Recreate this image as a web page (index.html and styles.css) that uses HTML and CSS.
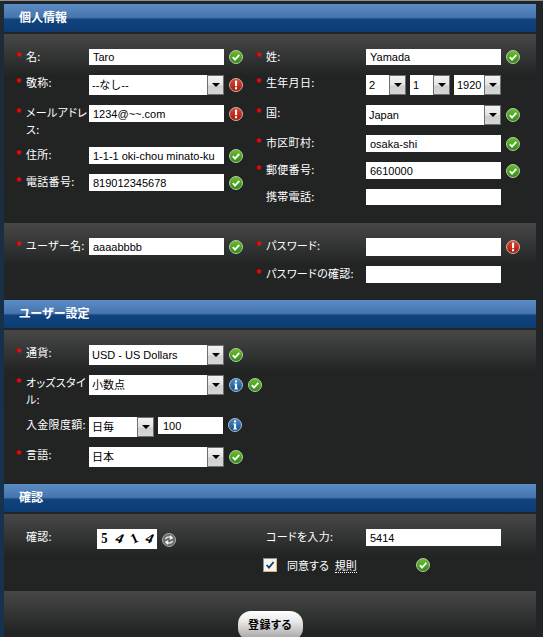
FILE: index.html
```html
<!DOCTYPE html>
<html lang="ja">
<head>
<meta charset="utf-8">
<title>登録</title>
<link rel="stylesheet" href="styles.css">
</head>
<body>
<svg class="sprite" aria-hidden="true">
  <defs>
    <linearGradient id="gGreen" x1="0" y1="0" x2="0" y2="1"><stop offset="0" stop-color="#6cc02c"/><stop offset="1" stop-color="#2c8a10"/></linearGradient>
    <linearGradient id="gRed" x1="0" y1="0" x2="0" y2="1"><stop offset="0" stop-color="#e04a32"/><stop offset="1" stop-color="#a81408"/></linearGradient>
    <linearGradient id="gBlue" x1="0" y1="0" x2="0" y2="1"><stop offset="0" stop-color="#4a8cc8"/><stop offset="1" stop-color="#124f8e"/></linearGradient>
    <symbol id="ok" viewBox="0 0 14 14"><circle cx="7" cy="7" r="6.5" fill="url(#gGreen)" stroke="#b9c4b0"/><path d="M3.8 7.2 6 9.6 10.3 4.9" fill="none" stroke="#fff" stroke-width="1.9"/></symbol>
    <symbol id="err" viewBox="0 0 14 14"><circle cx="7" cy="7" r="6.5" fill="url(#gRed)" stroke="#c9b5b0"/><rect x="6" y="2.6" width="2.1" height="5.6" fill="#fff"/><rect x="6" y="9.2" width="2.1" height="2.1" fill="#fff"/></symbol>
    <symbol id="info" viewBox="0 0 14 14"><circle cx="7" cy="7" r="6.5" fill="url(#gBlue)" stroke="#b0bcc9"/><rect x="6" y="2.4" width="2.1" height="2" fill="#fff"/><path d="M5.2 5.6H8.1V10.4H9V11.4H5.2V10.4H6V6.6H5.2Z" fill="#fff"/></symbol>
  </defs>
</svg>
<div class="page">
  <h2 class="bar">個人情報</h2>
  <section class="panel p1">
    <div class="col left">
      <div class="row"><span class="star">*</span><label class="lab">名:</label><div class="ctrl"><input class="inp h16" value="Taro"><svg class="ic"><use href="#ok"/></svg></div></div>
      <div class="row"><span class="star">*</span><label class="lab">敬称:</label><div class="ctrl"><div class="sel w135"><select><option>--なし--</option></select><span class="arrow"></span></div><svg class="ic"><use href="#err"/></svg></div></div>
      <div class="row"><span class="star">*</span><label class="lab">メールアドレス:</label><div class="ctrl"><input class="inp" value="1234@~~.com"><svg class="ic"><use href="#err"/></svg></div></div>
      <div class="row"><span class="star">*</span><label class="lab">住所:</label><div class="ctrl"><input class="inp" value="1-1-1 oki-chou minato-ku"><svg class="ic"><use href="#ok"/></svg></div></div>
      <div class="row"><span class="star">*</span><label class="lab">電話番号:</label><div class="ctrl"><input class="inp" value="819012345678"><svg class="ic"><use href="#ok"/></svg></div></div>
    </div>
    <div class="col right">
      <div class="row"><span class="star">*</span><label class="lab">姓:</label><div class="ctrl"><input class="inp h16" value="Yamada"><svg class="ic"><use href="#ok"/></svg></div></div>
      <div class="row"><span class="star">*</span><label class="lab">生年月日:</label><div class="ctrl dates"><div class="sel w40"><select><option>2</option></select><span class="arrow"></span></div><div class="sel w40"><select><option>1</option></select><span class="arrow"></span></div><div class="sel w47"><select><option>1920</option></select><span class="arrow"></span></div></div></div>
      <div class="row"><span class="star">*</span><label class="lab">国:</label><div class="ctrl"><div class="sel w135"><select><option>Japan</option></select><span class="arrow"></span></div><svg class="ic"><use href="#ok"/></svg></div></div>
      <div class="row"><span class="star">*</span><label class="lab">市区町村:</label><div class="ctrl"><input class="inp" value="osaka-shi"><svg class="ic"><use href="#ok"/></svg></div></div>
      <div class="row"><span class="star">*</span><label class="lab">郵便番号:</label><div class="ctrl"><input class="inp" value="6610000"><svg class="ic"><use href="#ok"/></svg></div></div>
      <div class="row"><span class="star"></span><label class="lab">携帯電話:</label><div class="ctrl"><input class="inp h16"></div></div>
    </div>
  </section>
  <section class="panel p2">
    <div class="col left">
      <div class="row"><span class="star">*</span><label class="lab">ユーザー名:</label><div class="ctrl"><input class="inp" value="aaaabbbb"><svg class="ic"><use href="#ok"/></svg></div></div>
    </div>
    <div class="col right">
      <div class="row"><span class="star">*</span><label class="lab">パスワード:</label><div class="ctrl"><input class="inp h18"><svg class="ic"><use href="#err"/></svg></div></div>
      <div class="row"><span class="star">*</span><label class="lab">パスワードの確認:</label><div class="ctrl"><input class="inp"></div></div>
    </div>
  </section>
  <h2 class="bar">ユーザー設定</h2>
  <section class="panel p2">
    <div class="col left wide">
      <div class="row"><span class="star">*</span><label class="lab">通貨:</label><div class="ctrl"><div class="sel w135"><select><option>USD - US Dollars</option></select><span class="arrow"></span></div><svg class="ic"><use href="#ok"/></svg></div></div>
      <div class="row"><span class="star">*</span><label class="lab">オッズスタイル:</label><div class="ctrl"><div class="sel w135"><select><option>小数点</option></select><span class="arrow"></span></div><svg class="ic"><use href="#info"/></svg><svg class="ic"><use href="#ok"/></svg></div></div>
      <div class="row"><span class="star"></span><label class="lab">入金限度額:</label><div class="ctrl top"><div class="sel w65"><select><option>日毎</option></select><span class="arrow"></span></div><input class="inp w65i" value="100"><svg class="ic"><use href="#info"/></svg></div></div>
      <div class="row"><span class="star">*</span><label class="lab">言語:</label><div class="ctrl"><div class="sel w135"><select><option>日本</option></select><span class="arrow"></span></div><svg class="ic"><use href="#ok"/></svg></div></div>
    </div>
  </section>
  <h2 class="bar">確認</h2>
  <section class="panel p4">
    <div class="col left">
      <div class="row"><span class="star"></span><label class="lab">確認:</label><div class="ctrl captcha-wrap"><div class="captcha"><span class="c1">5</span><span class="c2">4</span><span class="c3">1</span><span class="c2">4</span></div>
        <svg class="ic" viewBox="0 0 14 14"><circle cx="7" cy="7" r="6.5" fill="#6a6c6e" stroke="#a8a8a8"/><path d="M3.5 6.2C4 4.2 7 3.4 9 4.6M8 2.8 10.2 4.8 7.8 6.2M10.5 7.8C10 9.8 7 10.6 5 9.4M6 11.2 3.8 9.2 6.2 7.8" fill="none" stroke="#fff" stroke-width="1.2"/></svg></div></div>
    </div>
    <div class="col right">
      <div class="row"><span class="star"></span><label class="lab">コードを入力:</label><div class="ctrl"><input class="inp" value="5414"></div></div>
      <div class="agree">
        <svg class="check" viewBox="0 0 14 14"><rect x=".5" y=".5" width="13" height="13" fill="#f4f4f0" stroke="#8a94a6"/><path d="M13.5 .5V13.5H.5" fill="none" stroke="#e8b060"/><path d="M3.6 7 6 9.6 10.6 4" fill="none" stroke="#123a70" stroke-width="1.8"/></svg>
        <span class="agree-text">同意する</span>
        <a class="rules">規則</a>
        <svg class="ic agree-ic"><use href="#ok"/></svg>
      </div>
    </div>
  </section>
  <section class="panel p5">
    <button class="submit" type="button">登録する</button>
  </section>
</div>
</body>
</html>
```
FILE: styles.css
```css
html, body {
  margin: 0;
  height: 637px;
  overflow: hidden;
  background: #212528;
}
.sprite {
  display: block;
  width: 0;
  height: 0;
}
.page {
  box-sizing: border-box;
  height: 637px;
  overflow: hidden;
  padding: 3px 7px 0 4px;
  border-top: 1px solid #8b9094;
  background: linear-gradient(to bottom, #1f2a33, #16324e 65%) no-repeat left top / 4px 100%, #212528;
  font: 11px/17px "Noto Sans CJK JP", "Liberation Sans", sans-serif;
  font-feature-settings: "palt";
  color: #fff;
}
.bar {
  margin: 0 0 2px;
  height: 28px;
  padding-left: 15px;
  box-sizing: border-box;
  font-size: 12px;
  font-weight: 700;
  line-height: 26px;
  color: #fff;
  background: linear-gradient(to bottom, #5b8cc6 0, #4876ae 13px, #3f6a9f 14px, #0f447f 15px, #0d3b72 28px);
}
.panel {
  display: flex;
  background: linear-gradient(to bottom, #474747 0, #222424 42px);
}
.p1 { padding: 15px 0 18px 12px; }
.p2 { padding: 15px 0 17px 12px; }
.p4 { padding: 15px 0 19px 12px; }
.p5 {
  justify-content: center;
  padding: 20px 0 0;
}
.col {
  display: flex;
  flex-direction: column;
  gap: 10px;
}
.left { width: 240px; }
.left.wide { width: 300px; }
.row {
  display: flex;
  align-items: flex-start;
}
.star {
  flex: none;
  width: 10px;
  color: #f00;
  font: 700 13px/15px "Liberation Sans", sans-serif;
}
.lab {
  flex: none;
  width: 63px;
  margin: -1px 0;
  letter-spacing: .3px;
}
.right .lab { width: 100px; }
.ctrl {
  display: flex;
  align-items: center;
  gap: 5px;
}
.dates { gap: 4px; }
.inp {
  display: block;
  box-sizing: border-box;
  width: 135px;
  height: 17px;
  margin: 0;
  padding: 0 4px;
  border: 0;
  border-radius: 0;
  outline: 0;
  background: #fff;
  color: #000;
  font: 11px "Liberation Sans", "Noto Sans CJK JP", sans-serif;
}
.h16 { height: 16px; }
.h18 { height: 18px; }
.w65i { width: 65px; margin-left: -1px; padding-left: 5px; }
.ic {
  display: block;
  flex: none;
  width: 14px;
  height: 14px;
}
.sel {
  display: flex;
  height: 20px;
  background: #fff;
}
.w135 { width: 135px; }
.w40 { width: 40px; }
.w47 { width: 47px; }
.w65 { width: 65px; }
.sel select {
  flex: 1;
  min-width: 0;
  height: 20px;
  margin: 0;
  padding: 0 0 0 3px;
  border: 0;
  outline: 0;
  appearance: none;
  background: #fff;
  color: #000;
  font: 11px "Liberation Sans", "Noto Sans CJK JP", sans-serif;
}
.arrow {
  flex: none;
  display: flex;
  align-items: center;
  justify-content: center;
  box-sizing: border-box;
  width: 17px;
  height: 20px;
  border: 1px solid #6f6f6f;
  background: linear-gradient(to bottom, #f2f2f2, #e4e4e4 50%, #cfcfcf 55%, #d6d6d6);
}
.arrow::before {
  content: "";
  width: 0;
  height: 0;
  border-style: solid;
  border-width: 4px 4px 0;
  border-color: #000 transparent transparent;
}
.top { align-items: flex-start; gap: 5px; }
.top .ic { margin-top: 1px; }
.captcha-wrap {
  padding-left: 8px;
  align-items: flex-start;
}
.captcha-wrap .ic { margin-top: 4px; }
.captcha {
  display: flex;
  justify-content: space-around;
  width: 60px;
  height: 20px;
  background: #fff;
  color: #000;
  font: 700 14px/20px "Liberation Serif", serif;
}
.captcha span { display: block; }
.c1 { transform: scaleX(.9); }
.c2 { transform: rotate(14deg) skewX(-12deg); }
.c3 { transform: rotate(-24deg); }
.agree {
  display: flex;
  align-items: center;
  height: 14px;
  margin-top: 2px;
  margin-left: 7px;
}
.check {
  display: block;
  flex: none;
  width: 14px;
  height: 14px;
  margin-right: 10px;
}
.agree-text { margin-right: 6px; }
.rules {
  color: #fff;
  line-height: 14px;
  border-bottom: 1px dotted #fff;
}
.agree-ic { margin-left: 59px; }
.submit {
  box-sizing: border-box;
  width: 65px;
  height: 30px;
  margin: 0;
  padding: 0 0 4px;
  border: 0;
  border-radius: 13px;
  background: linear-gradient(to bottom, #fff 0, #e8e8e8 35%, #9c9c9c 100%);
  color: #000;
  font: 700 11px/17px "Noto Sans CJK JP", sans-serif;
  font-feature-settings: "palt";
  letter-spacing: .5px;
}
```
